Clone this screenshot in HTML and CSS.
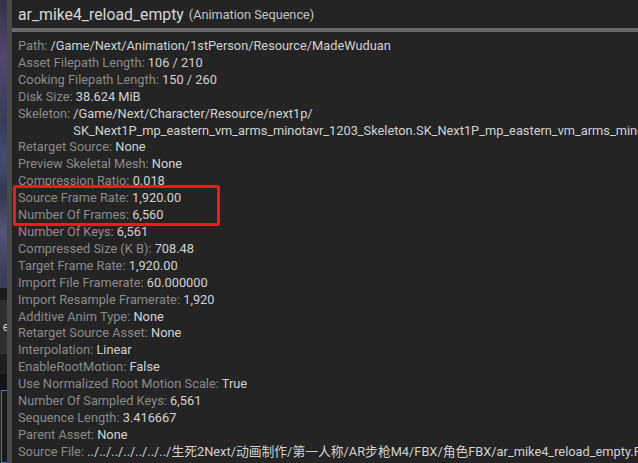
FILE: index.html
```html
<!DOCTYPE html>
<html>
<head>
<meta charset="utf-8">
<link rel="stylesheet" href="styles.css">
</head>
<body>
<div class="screen">
  <div class="strip">
    <div class="strip-img"></div>
    <div class="strip-dark"></div>
    <div class="strip-btn"><span>e</span></div>
    <div class="strip-dark2"></div>
    <div class="strip-black"></div>
    <div class="strip-sel"></div>
  </div>
  <div class="edge"></div>
  <div class="panel">
    <div class="header">
      <span class="title">ar_mike4_reload_empty</span>
      <span class="type">(Animation Sequence)</span>
    </div>
    <div class="sep"></div>
    <div class="body">
      <div class="row"><span class="k">Path:</span> <span class="v">/Game/Next/Animation/1stPerson/Resource/MadeWuduan</span></div>
      <div class="row"><span class="k">Asset Filepath Length:</span> <span class="v">106 / 210</span></div>
      <div class="row"><span class="k">Cooking Filepath Length:</span> <span class="v">150 / 260</span></div>
      <div class="row"><span class="k">Disk Size:</span> <span class="v">38.624 MiB</span></div>
      <div class="row split"><span class="k">Skeleton:&nbsp;</span><span class="v">/Game/Next/Character/Resource/next1p/<br>SK_Next1P_mp_eastern_vm_arms_minotavr_1203_Skeleton.SK_Next1P_mp_eastern_vm_arms_minotavr_1203_Skeleton</span></div>
      <div class="row"><span class="k">Retarget Source:</span> <span class="v">None</span></div>
      <div class="row"><span class="k">Preview Skeletal Mesh:</span> <span class="v">None</span></div>
      <div class="row"><span class="k">Compression Ratio:</span> <span class="v">0.018</span></div>
      <div class="highlight">
        <div class="row"><span class="k">Source Frame Rate:</span> <span class="v">1,920.00</span></div>
        <div class="row"><span class="k">Number Of Frames:</span> <span class="v">6,560</span></div>
        <div class="mark"></div>
      </div>
      <div class="row"><span class="k">Number Of Keys:</span> <span class="v">6,561</span></div>
      <div class="row"><span class="k">Compressed Size (K B):</span> <span class="v">708.48</span></div>
      <div class="row"><span class="k">Target Frame Rate:</span> <span class="v">1,920.00</span></div>
      <div class="row"><span class="k">Import File Framerate:</span> <span class="v">60.000000</span></div>
      <div class="row"><span class="k">Import Resample Framerate:</span> <span class="v">1,920</span></div>
      <div class="row"><span class="k">Additive Anim Type:</span> <span class="v">None</span></div>
      <div class="row"><span class="k">Retarget Source Asset:</span> <span class="v">None</span></div>
      <div class="row"><span class="k">Interpolation:</span> <span class="v">Linear</span></div>
      <div class="row"><span class="k">EnableRootMotion:</span> <span class="v">False</span></div>
      <div class="row"><span class="k">Use Normalized Root Motion Scale:</span> <span class="v">True</span></div>
      <div class="row"><span class="k">Number Of Sampled Keys:</span> <span class="v">6,561</span></div>
      <div class="row"><span class="k">Sequence Length:</span> <span class="v">3.416667</span></div>
      <div class="row"><span class="k">Parent Asset:</span> <span class="v">None</span></div>
      <div class="row"><span class="k">Source File:</span> <span class="v">../../../../../../../生死2Next/动画制作/第一人称/AR步枪M4/FBX/角色FBX/ar_mike4_reload_empty.FBX</span></div>
    </div>
  </div>
</div>
</body>
</html>
```
FILE: styles.css
```css
html, body {
  margin: 0;
  padding: 0;
  background: #242424;
}
.screen {
  display: flex;
  width: 638px;
  height: 463px;
  overflow: hidden;
  font-family: Roboto, "Noto Sans CJK SC", sans-serif;
}
.strip {
  width: 7px;
  flex: none;
  display: flex;
  flex-direction: column;
  overflow: hidden;
}
.strip-img {
  height: 288px;
  background:
    radial-gradient(circle at 30% 20%, rgba(120, 90, 150, 0.5) 0, transparent 30%),
    radial-gradient(circle at 60% 55%, rgba(90, 110, 160, 0.45) 0, transparent 25%),
    radial-gradient(circle at 20% 80%, rgba(130, 120, 170, 0.45) 0, transparent 20%),
    linear-gradient(180deg, #2b2d3e 0%, #363a55 40%, #2e3148 70%, #3b3f5c 100%);
}
.strip-dark {
  height: 12px;
  background: #1a1a1a;
}
.strip-btn {
  height: 54px;
  background: #2f2f2f;
  display: flex;
  align-items: center;
  justify-content: flex-end;
  color: #cfcfcf;
  font-size: 12px;
}
.strip-btn span {
  margin-right: -2px;
}
.strip-dark2 {
  height: 20px;
  background: #1f1f1f;
}
.strip-black {
  height: 16px;
  background: #141414;
}
.strip-sel {
  flex: 1;
  background: #1a1a1a;
  border: 1px solid #2f7fd8;
  border-right: none;
  margin-left: 1px;
}
.edge {
  width: 5px;
  flex: none;
  background: #4a4a4a;
}
.panel {
  flex: 1;
  min-width: 0;
  display: flex;
  flex-direction: column;
  background: #242424;
  overflow: hidden;
}
.header {
  height: 28px;
  display: flex;
  align-items: center;
  padding-left: 6px;
  white-space: nowrap;
}
.title {
  font-size: 15.8px;
  color: #d6d6d6;
}
.type {
  font-size: 12.7px;
  color: #c4c4c4;
  margin-left: 5px;
}
.sep {
  height: 4px;
  background: #686868;
}
.body {
  padding: 6px 0 0 6px;
  font-size: 12.8px;
  line-height: 16.9px;
}
.row {
  white-space: nowrap;
}
.row.split {
  display: flex;
}
.row.split .v {
  white-space: nowrap;
}
.k {
  color: #8b8b8b;
}
.v {
  color: #d2d2d2;
}
.highlight {
  position: relative;
}
.mark {
  position: absolute;
  left: -5px;
  top: -5px;
  width: 201px;
  height: 35px;
  border: 3px solid #f01a1a;
  border-radius: 2px;
}
```
